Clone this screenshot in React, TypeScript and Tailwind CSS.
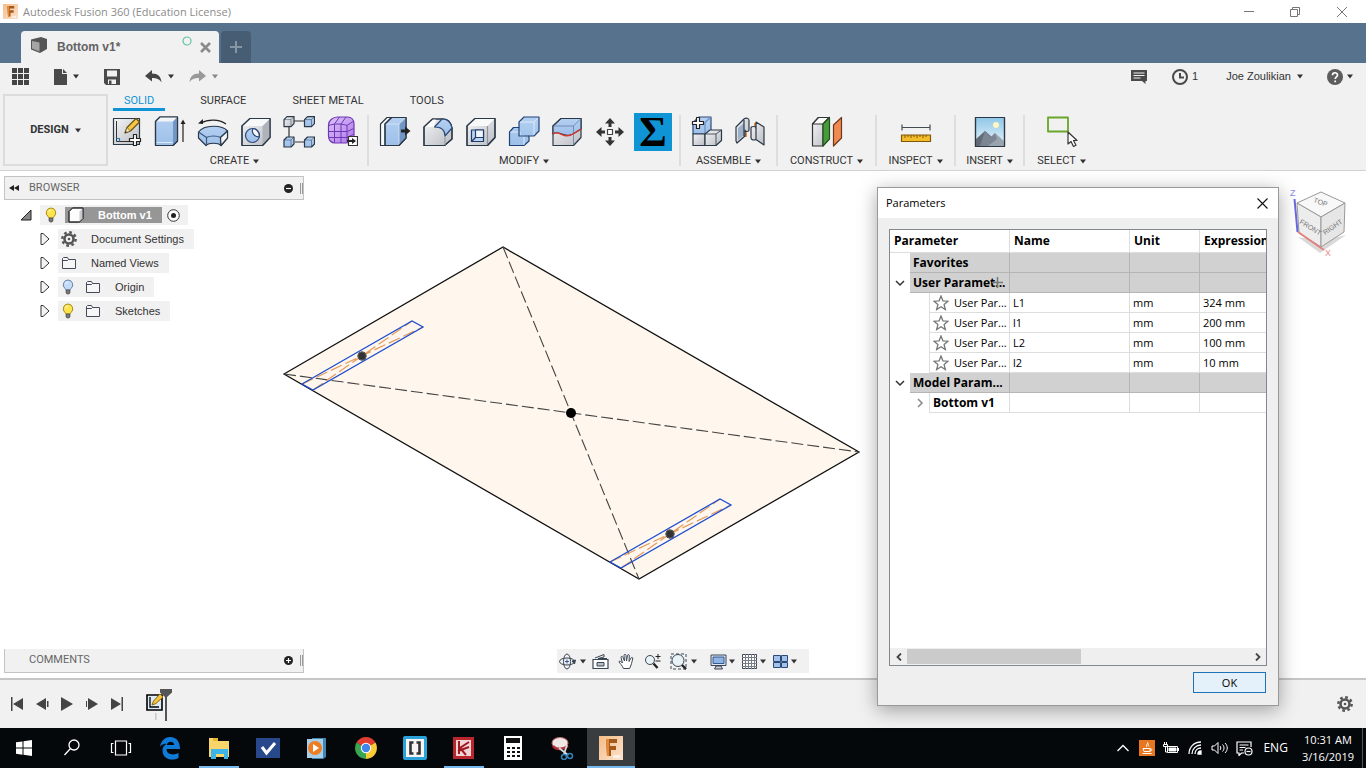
import React, { useState } from "react";

const uiFont = "font-['Liberation_Sans',Arial,sans-serif]";
const capsFont = "font-[Roboto,Arial,sans-serif]";
const winFont = "font-['Open_Sans','Noto_Sans',sans-serif]";

type IconProps = { className?: string };

const Caret: React.FC<IconProps> = ({ className = "text-[#333]" }) => (
  <svg width="6" height="5" viewBox="0 0 6 5" className={className} aria-hidden="true">
    <path d="M0 0.5h6L3 4.5z" fill="currentColor" />
  </svg>
);

const Gradients: React.FC = () => (
  <svg width="0" height="0" className="absolute" aria-hidden="true">
    <defs>
      <linearGradient id="blue" x1="0" y1="0" x2="0" y2="1">
        <stop offset="0" stopColor="#b4d0f2" />
        <stop offset="1" stopColor="#9dbfe8" />
      </linearGradient>
      <linearGradient id="gray" x1="0" y1="0" x2="1" y2="1">
        <stop offset="0" stopColor="#f4f5f7" />
        <stop offset="1" stopColor="#b9bcc2" />
      </linearGradient>
      <linearGradient id="purple" x1="0" y1="0" x2="1" y2="1">
        <stop offset="0" stopColor="#dcc4f8" />
        <stop offset="1" stopColor="#ad76ea" />
      </linearGradient>
      <linearGradient id="sky" x1="0" y1="0" x2="0" y2="1">
        <stop offset="0" stopColor="#8fc6e8" />
        <stop offset="1" stopColor="#eaf6fb" />
      </linearGradient>
      <linearGradient id="fusion" x1="0" y1="0" x2="1" y2="1">
        <stop offset="0" stopColor="#f5bd88" />
        <stop offset="1" stopColor="#fbe3cd" />
      </linearGradient>
    </defs>
  </svg>
);

const ToolSvg: React.FC<{ children: React.ReactNode }> = ({ children }) => (
  <svg
    width="32"
    height="32"
    viewBox="0 0 32 32"
    fill="none"
    stroke="#2b3848"
    strokeWidth="1.2"
    strokeLinejoin="round"
    aria-hidden="true"
  >
    {children}
  </svg>
);

const SketchIcon = () => (
  <ToolSvg>
    <rect x="2.5" y="2.5" width="26" height="26" fill="url(#gray)" />
    <path d="M5.500 5v20.500H26" stroke="#333" strokeWidth="1" />
    <path d="M5.500 22.500h3v3" stroke="#2576b8" />
    <path d="M14 17l2-5.500L25 2.500l3.500 3.500L19.500 15z" fill="#f6c644" stroke="#6d5313" />
    <path d="M14 17l2-5.500 3.500 3.500z" fill="#f7e6c4" stroke="#6d5313" strokeWidth="0.8" />
    <path d="M14 17l.8-2 1.200 1.200z" fill="#222" stroke="none" />
    <path d="M22.500 18.500h3v4h4v3h-4v4h-3v-4h-4v-3h4z" fill="#fff" stroke="#222" />
  </ToolSvg>
);

const ExtrudeIcon = () => (
  <ToolSvg>
    <path d="M1.500 5.500L6 1h17.500v24L19 29.500H1.500z" fill="url(#blue)" />
    <path d="M1.500 5.500L6 1h17.500L19 5.500z" fill="#f2f4f7" stroke="none" />
    <path d="M19 5.500V29.500l4.500-4.500V1z" fill="#7397c4" stroke="none" />
    <path d="M2.500 26.500h16" stroke="#e2edfa" strokeWidth="0.9" />
    <path d="M1.500 5.500L6 1h17.500v24L19 29.500H1.500z" />
    <path d="M29 26V6" stroke="#222" />
    <path d="M26.500 8L29 3.500 31.500 8z" fill="#222" stroke="none" />
  </ToolSvg>
);

const RevolveIcon = () => (
  <ToolSvg>
    <path d="M4 7c7-4 18-4 25 1" stroke="#222" />
    <path d="M1 7.500l5-4.500v5z" fill="#222" stroke="none" />
    <path
      d="M1.500 16C7 8.500 25 8.500 30.500 15v7l-6.500 7.500c-3-3-12-3-15 0L1.500 22z"
      fill="url(#blue)"
    />
    <path d="M1.500 16l8 5.500c3-2 11-2 14 0l7-6.500M9.500 21.500v7.500M23.500 21.500v7.500" stroke="#3d5980" />
    <path d="M23.500 21.500l7-6.500v7l-6.500 7.500z" fill="#f4f5f7" />
  </ToolSvg>
);

const HoleIcon = () => (
  <ToolSvg>
    <path d="M2 10l8-7.500h20v19L22.500 29.500H2z" fill="url(#gray)" />
    <path d="M22.500 10v19.500l7.500-8V2.500z" fill="#aeb2b9" stroke="none" />
    <path d="M2 10l8-7.500h20L22.500 10z" fill="#f7f8f9" stroke="none" />
    <path d="M2 10l8-7.500h20v19L22.500 29.500H2z" />
    <circle cx="12.500" cy="19.500" r="7" fill="url(#blue)" stroke="#2c4a78" />
    <path d="M13 12.500c-2 4 1 8 6 8.500 1-4-2-8-6-8.500z" fill="#f7f8f9" stroke="#2c4a78" />
  </ToolSvg>
);

const MiniCube: React.FC<{ x: number; y: number; fill: string }> = ({ x, y, fill }) => (
  <g>
    <path d={`M${x} ${y + 3}l3-3h7v7l-3 3h-7z`} fill={fill} />
    <path d={`M${x} ${y + 3}h7v7M${x + 7} ${y + 3}l3-3`} strokeWidth="0.5" />
  </g>
);

const PatternIcon = () => (
  <ToolSvg>
    <path d="M11 5h10M6 11v10M12 26h9" stroke="#333" />
    <MiniCube x={1} y={0.6} fill="url(#gray)" />
    <MiniCube x={21.5} y={0.6} fill="url(#blue)" />
    <MiniCube x={1} y={21} fill="url(#blue)" />
    <MiniCube x={21.5} y={21} fill="url(#blue)" />
  </ToolSvg>
);

const FormIcon = () => (
  <ToolSvg>
    <path
      d="M2.500 9c0-4 4-8 9-8h10c4 0 6.500 3 6.500 7v11c0 5-4 8-8 8H9c-4 0-6.500-3-6.500-7z"
      fill="url(#purple)"
      stroke="#6f37b5"
    />
    <path
      d="M3 9.500c4-2 14-2 18 0M2.500 15.500h19M3 21.500h18M8.500 8v18.500M15 8v19M21 9.500v16M21 9.500l6-4M21.500 15.500l6-3M21 21.500l6-3M8.500 8l5-7M15 8l5-7"
      stroke="#6f37b5"
      strokeWidth="1"
    />
    <rect x="22.500" y="20.500" width="9" height="9" fill="#fff" stroke="#333" />
    <path d="M21 25h5" stroke="#222" strokeWidth="2" />
    <path d="M26 22l4 3-4 3z" fill="#222" stroke="none" />
  </ToolSvg>
);

const PressPullIcon = () => (
  <ToolSvg>
    <path d="M1.500 8L8 1.500h4V23l-6 6.500H1.500z" fill="#fafafa" />
    <path d="M6 8l6.500-6.500H27V22l-7 7.500H6z" fill="url(#blue)" />
    <path d="M20 8v21.500L27 22V1.500z" fill="#7397c4" stroke="none" />
    <path d="M6 8h14l7-6.500M20 8v21.500" stroke="#dce9f8" strokeWidth="0.8" />
    <path d="M6 8l6.500-6.500H27V22l-7 7.500H6z" />
    <path d="M22 13.500h4v-3l5.500 4.500-5.500 4.500v-3h-4z" fill="#222" stroke="none" />
  </ToolSvg>
);

const FilletIcon = () => (
  <ToolSvg>
    <path d="M2 11l8.500-8H21c5 0 8 4 9 9v11l-7.500 6.500H2z" fill="url(#gray)" />
    <path d="M2 11l8.500-8H14l-2 8z" fill="#fbfbfc" stroke="none" />
    <path d="M2 11l8.500-8H21c5 0 8 4 9 9v11l-7.500 6.500H2z" />
    <path d="M20 3c6 0 9 4 10 9l-7 8c0-6-3-9-10.500-9z" fill="url(#blue)" stroke="#2c4a78" />
    <path d="M23 20v9" stroke="#9a9ea6" />
  </ToolSvg>
);

const ShellIcon = () => (
  <ToolSvg>
    <path d="M2 10l8-7.500h20v19L22.500 29.500H2z" fill="url(#gray)" />
    <path d="M2 10l8-7.500h20L22.500 10z" fill="#f9f9fa" stroke="none" />
    <path d="M22.500 10v19.500" stroke="#8e939b" />
    <path d="M2 10l8-7.500h20v19L22.500 29.500H2z" />
    <rect x="6.500" y="14" width="12" height="11.500" fill="#bcd4f1" stroke="#1d3c6c" />
    <rect x="10.500" y="14" width="8" height="7.500" fill="#f1f5fa" stroke="#1d3c6c" />
    <path d="M6.500 25.500l4-4" stroke="#1d3c6c" />
  </ToolSvg>
);

const CombineIcon = () => (
  <ToolSvg>
    <path
      d="M1.500 16l4-4.500H11V6l5-5h15v14l-5 5h-5v5l-5 4.500H1.500z"
      fill="url(#blue)"
      stroke="#1f4379"
    />
    <path d="M12 6h14v13M26 6l4-4M2.500 16h9.500v4h4v9" stroke="#e2edfa" strokeWidth="0.9" />
    <path d="M11 11.500V20h10" stroke="#1f4379" />
  </ToolSvg>
);

const SplitIcon = () => (
  <ToolSvg>
    <path d="M2 10l8-7.500h20v19L22.500 29.500H2z" fill="url(#gray)" />
    <path d="M2 18c6-5 10 5 20 0l8-5V2.500H10L2 10z" fill="url(#blue)" />
    <path d="M22.500 10v19M3 10h19.500L29 3.500" stroke="#6d86a8" strokeWidth="0.9" />
    <path d="M2 18c6-5 10 6 20 0l8-5" stroke="#e0342b" strokeWidth="1.400" />
  </ToolSvg>
);

const MoveIcon = () => (
  <ToolSvg>
    <rect x="13.500" y="13.500" width="5" height="5" fill="#fff" stroke="#444" />
    <g fill="#333" stroke="none">
      <path d="M16 2l5 5.500h-3.500V11h-3V7.500H11z" />
      <path d="M16 30l5-5.500h-3.500V21h-3v3.500H11z" />
      <path d="M2 16l5.500-5v3.500H11v3H7.500V21z" />
      <path d="M30 16l-5.500-5v3.500H21v3h3.500V21z" />
    </g>
  </ToolSvg>
);

const SigmaIcon = () => (
  <span className="flex h-[38px] w-[38px] items-center justify-center bg-[#0f94d6] font-['Liberation_Serif',serif] text-[42px] leading-none font-bold text-black">
    Σ
  </span>
);

const ComponentIcon = () => (
  <ToolSvg>
    <path d="M2 18V6.500L8 1h12v16.500L14 18z" fill="url(#blue)" stroke="#2c4a78" />
    <path d="M14 18V6.500L20 1" stroke="#6d8fbd" />
    <path d="M2 18h12v11.500H2z" fill="url(#gray)" />
    <path d="M14 18l5-4h11.500v10.500L25 29.500H14z" fill="url(#gray)" />
    <path d="M14 18h11v11.500M25 18l5.500-4" strokeWidth="0.800" />
    <path d="M5.500 1.500h3v4h4v3h-4v4h-3v-4h-4v-3h4z" fill="#fff" stroke="#222" />
  </ToolSvg>
);

const JointIcon = () => (
  <ToolSvg>
    <path d="M12 12v9M21 7v6" stroke="#ea8b3c" strokeWidth="2" />
    <path d="M2 11l8-8c2-1.500 5-1 5 1.500V14c0 2-4 2-4 0v6l-8 7-1-2z" fill="url(#gray)" />
    <path d="M4 12l6-5v12l-6 5z" fill="#9db0c9" stroke="none" />
    <path d="M10 4v16" />
    <path d="M17 12c0-2 5-2 5 0V6l8 5v18l-8-5.500c-2 1-5 .5-5-1.500z" fill="url(#gray)" />
    <path d="M22 12v11" />
  </ToolSvg>
);

const ConstructIcon = () => (
  <ToolSvg>
    <path d="M1.500 8l6-6.500h10L12 8v22H1.500z" fill="url(#gray)" stroke="#333" />
    <path d="M1.500 8l6-6.500h10.500L12 8z" fill="#fbfbfb" stroke="#333" />
    <path d="M12 8l6.500-6.500V23L12 30z" fill="#479b3b" stroke="#234f1e" />
    <path d="M22.500 9L30.500 1.500V22l-8 8z" fill="#ee8a52" stroke="#703718" />
  </ToolSvg>
);

const InspectIcon = () => (
  <ToolSvg>
    <path d="M2 11.500h28M2 8.500v6M30 8.500v6" stroke="#444b55" />
    <rect x="1.500" y="19" width="29" height="6.500" fill="#f3bd2a" stroke="#80570b" />
    <path d="M5 19v3M8 19v2M11 19v3M14 19v2M17 19v3M20 19v2M23 19v3M26 19v2" stroke="#80570b" strokeWidth="1" />
  </ToolSvg>
);

const InsertIcon = () => (
  <ToolSvg>
    <rect x="1.500" y="1.500" width="29" height="29" fill="url(#sky)" />
    <circle cx="22" cy="9" r="3" fill="#fff6c4" stroke="none" />
    <path d="M2 23l9-8 7 6v9H2z" fill="#626c79" stroke="none" />
    <path d="M9 30l12-13 9 8v5z" fill="#9aa4af" stroke="none" />
    <path d="M11 15l6 6 4-4 2 6-9 7H6z" fill="#7c8692" stroke="none" />
    <rect x="1.500" y="1.500" width="29" height="29" />
  </ToolSvg>
);

const SelectIcon = () => (
  <ToolSvg>
    <rect x="2" y="1.500" width="20" height="14" stroke="#69a52b" strokeWidth="1.800" />
    <path d="M22 16v12l3-2.500 2.500 5 2.500-1.200-2.500-4.800h3.500z" fill="#fff" stroke="#333" />
  </ToolSvg>
);

const GearIcon: React.FC<IconProps> = ({ className = "text-[#555]" }) => (
  <svg width="16" height="16" viewBox="0 0 16 16" fill="none" className={className} stroke="currentColor" aria-hidden="true">
    <circle cx="8" cy="8" r="6.700" strokeWidth="2.400" strokeDasharray="2.700 2.560" />
    <circle cx="8" cy="8" r="4.500" strokeWidth="2.600" />
    <circle cx="8" cy="8" r="1.300" fill="currentColor" stroke="none" />
  </svg>
);

const Bulb: React.FC<{ on?: boolean }> = ({ on }) => (
  <svg width="12" height="16" viewBox="0 0 12 16" aria-hidden="true">
    <path
      d="M6 1a4.800 4.800 0 0 1 3 8.500c-.6.600-.8 1-.8 1.500H3.800c0-.5-.2-.9-.8-1.500A4.800 4.800 0 0 1 6 1z"
      fill={on ? "#fbe44c" : "#c4dbf7"}
      stroke={on ? "#a98b1c" : "#6684ac"}
    />
    <path d="M4 11h4v3l-1 1H5l-1-1z" fill="#777" stroke="#444" strokeWidth="0.6" />
    <path d="M4 5c0-1 .8-2 2-2" stroke="#fff" fill="none" />
  </svg>
);

const FolderIcon = () => (
  <svg width="16" height="14" viewBox="0 0 16 14" fill="#f6f6f8" stroke="#444b57" aria-hidden="true">
    <path d="M1.500 12.500v-10l1-1h4l1 2h7v9z" />
    <path d="M1.500 4.500h5l1-1" fill="none" />
  </svg>
);

const BodyIcon = () => (
  <svg width="16" height="16" viewBox="0 0 16 16" stroke="#333" strokeLinejoin="round" aria-hidden="true">
    <path d="M1 4.500L4.500 1H15v10.500L11.500 15H1z" fill="#fdfdfd" />
    <path d="M11.500 4.500V15l3.500-3.500V1z" fill="#c9cbd0" stroke="none" />
    <path d="M1 4.500L4.500 1H15v10.500L11.500 15H1z" fill="none" />
  </svg>
);

const FusionLogo: React.FC<{ size: number }> = ({ size }) => (
  <svg width={size} height={size} viewBox="0 0 24 24" aria-hidden="true">
    <rect width="24" height="24" fill="url(#fusion)" />
    <path d="M7 3h11v4h-7v3h6v4h-5v6H8z" fill="#a3591c" />
    <path d="M7 3h3v17H8z" fill="#e58a39" />
    <path d="M14 19h7v3h-7z" fill="#fff" opacity="0.6" />
  </svg>
);

const TitleBar: React.FC = () => (
  <header className={`flex h-[23px] items-center bg-white ${winFont}`}>
    <div className="ml-[3px] flex items-center gap-[5px]">
      <FusionLogo size={15} />
      <h1 className="text-[11px] leading-4 text-[#8b8b8b]">Autodesk Fusion 360 (Education License)</h1>
    </div>
    <div className="ml-auto flex items-center text-[#777]">
      <button aria-label="Minimize" className="flex h-[22px] w-[46px] items-center justify-center">
        <svg width="10" height="10" viewBox="0 0 10 10" stroke="currentColor">
          <path d="M0 4.500h10" />
        </svg>
      </button>
      <button aria-label="Restore" className="flex h-[22px] w-[46px] items-center justify-center">
        <svg width="10" height="10" viewBox="0 0 10 10" fill="none" stroke="currentColor">
          <path d="M0.500 2.500h7v7h-7zM2.500 2.500v-2h7v7h-2" />
        </svg>
      </button>
      <button aria-label="Close" className="flex h-[22px] w-12 items-center justify-center">
        <svg width="10" height="10" viewBox="0 0 10 10" stroke="currentColor">
          <path d="M0 0l10 10M10 0L0 10" />
        </svg>
      </button>
    </div>
  </header>
);

const DocumentTabs: React.FC = () => (
  <div className={`flex h-10 items-end gap-0.5 bg-[#56728c] pl-[21px] ${uiFont}`}>
    <div className="flex h-8 w-[198px] items-center rounded-t bg-[#f1f1f1] pr-2 pl-2.5">
      <svg width="16" height="16" viewBox="0 0 16 16" className="mb-1" aria-hidden="true">
        <path d="M0 2.500L10 0l6 2v10l-7 4-9-3.500z" fill="#555" />
        <path d="M1 4l7.500 1.500v9L1 11.500z" fill="#a5a5a5" />
      </svg>
      <span className="ml-2.5 text-xs font-bold text-[#636363]">Bottom v1*</span>
      <svg width="10" height="10" viewBox="0 0 10 10" className="mb-3 ml-auto" aria-hidden="true">
        <circle cx="5" cy="5" r="4" fill="none" stroke="#5fc3a5" strokeWidth="1.200" />
      </svg>
      <button aria-label="Close tab" className="ml-2">
        <svg width="11" height="11" viewBox="0 0 11 11" stroke="#8a8a8a" strokeWidth="2.600">
          <path d="M1 1l9 9M10 1l-9 9" />
        </svg>
      </button>
    </div>
    <button aria-label="New tab" className="flex h-8 w-[30px] items-center justify-center rounded-t bg-[#475d74]">
      <svg width="12" height="12" viewBox="0 0 12 12" stroke="#8796a5" strokeWidth="2">
        <path d="M6 0v12M0 6h12" />
      </svg>
    </button>
  </div>
);

const QuickAccess: React.FC = () => (
  <div className={`flex h-[27px] items-center pr-[13px] pl-3 text-[11px] text-[#333] ${uiFont}`}>
    <button aria-label="Data panel">
      <svg width="17" height="17" viewBox="0 0 17 17" fill="#444">
        <path d="M0 0h5v5H0zM6 0h5v5H6zM12 0h5v5h-5zM0 6h5v5H0zM6 6h5v5H6zM12 6h5v5h-5zM0 12h5v5H0zM6 12h5v5H6zM12 12h5v5h-5z" />
      </svg>
    </button>
    <button aria-label="File" className="ml-[25px] flex items-center gap-1.5">
      <svg width="13" height="16" viewBox="0 0 13 16" fill="#4a4a4a">
        <path d="M0 0h8v5h5v11H0z" />
        <path d="M9 0l4 4H9z" />
      </svg>
      <Caret />
    </button>
    <button aria-label="Save" className="ml-[25px]">
      <svg width="16" height="16" viewBox="0 0 16 16">
        <path d="M0 0h16v16H2l-2-2z" fill="#4a4a4a" />
        <path d="M3 1.500h10v6H3zM4 10.500h8V15H4z" fill="#f1f1f1" />
        <path d="M5 11.500h2.500V15H5z" fill="#4a4a4a" />
      </svg>
    </button>
    <button aria-label="Undo" className="ml-[25px] flex items-center gap-1.5">
      <svg width="17" height="13" viewBox="0 0 17 13" fill="#444">
        <path d="M7 0v3.500c6 0 9 3 9.500 9-2-3.500-5-4.500-9.500-4.500v3.500L0 6z" />
      </svg>
      <Caret />
    </button>
    <button aria-label="Redo" className="ml-[15px] flex items-center gap-1.5">
      <svg width="17" height="13" viewBox="0 0 17 13" fill="#999">
        <path d="M10 0v3.500C4 3.500 1 6.500.5 12.500c2-3.500 5-4.500 9.500-4.500v3.500L17 6z" />
      </svg>
      <Caret className="text-[#888]" />
    </button>

    <button aria-label="Comments" className="ml-auto">
      <svg width="16" height="14" viewBox="0 0 16 14">
        <path d="M0 0h16v11h-1.500v3L11 11H0z" fill="#4a4a4a" />
        <path d="M2.500 3h11M2.500 5.500h11M2.500 8h7" stroke="#f1f1f1" />
      </svg>
    </button>
    <button aria-label="Job status" className="ml-[25px] flex items-center gap-1">
      <svg width="16" height="16" viewBox="0 0 16 16" fill="none" stroke="#4a4a4a" strokeWidth="2">
        <circle cx="8" cy="8" r="7" />
        <path d="M8 4v4.500h4" />
      </svg>
      1
    </button>
    <button className="ml-7 flex items-center gap-1.5">
      Joe Zoulikian
      <Caret />
    </button>
    <button aria-label="Help" className="ml-6 flex items-center gap-1">
      <svg width="16" height="16" viewBox="0 0 16 16">
        <circle cx="8" cy="8" r="8" fill="#5d5d5d" />
        <path d="M5.500 6.200C5.500 3 10.500 3 10.500 6c0 1.800-2.300 1.800-2.300 4M8.200 11.500v1.800" stroke="#fff" strokeWidth="1.700" fill="none" />
      </svg>
      <Caret />
    </button>
  </div>
);

const ribbonTabs = ["SOLID", "SURFACE", "SHEET METAL", "TOOLS"];

const ribbonGroups = [
  {
    label: "CREATE",
    width: "w-[259px] pr-1.5",
    tools: [
      { name: "Create sketch", Icon: SketchIcon },
      { name: "Extrude", Icon: ExtrudeIcon },
      { name: "Revolve", Icon: RevolveIcon },
      { name: "Hole", Icon: HoleIcon },
      { name: "Pattern", Icon: PatternIcon },
      { name: "Create form", Icon: FormIcon },
    ],
  },
  {
    label: "MODIFY",
    width: "w-[310px]",
    tools: [
      { name: "Press pull", Icon: PressPullIcon },
      { name: "Fillet", Icon: FilletIcon },
      { name: "Shell", Icon: ShellIcon },
      { name: "Combine", Icon: CombineIcon },
      { name: "Split body", Icon: SplitIcon },
      { name: "Move", Icon: MoveIcon },
      { name: "Change parameters", Icon: SigmaIcon },
    ],
  },
  {
    label: "ASSEMBLE",
    width: "w-[95px]",
    tools: [
      { name: "New component", Icon: ComponentIcon },
      { name: "Joint", Icon: JointIcon },
    ],
  },
  { label: "CONSTRUCT", width: "w-[97px]", tools: [{ name: "Offset plane", Icon: ConstructIcon }] },
  { label: "INSPECT", width: "w-[77px]", tools: [{ name: "Measure", Icon: InspectIcon }] },
  { label: "INSERT", width: "w-[67px]", tools: [{ name: "Decal", Icon: InsertIcon }] },
  { label: "SELECT", width: "w-[73px]", tools: [{ name: "Window select", Icon: SelectIcon }] },
];

const Ribbon: React.FC = () => {
  const [activeTab, setActiveTab] = useState("SOLID");

  return (
    <div className={`flex h-[81px] border-b border-[#d2d2d2] pl-[3px] text-[11px] text-[#333] ${capsFont}`}>
      <button className="mt-1 flex h-[72px] w-[105px] items-center justify-center gap-1.5 border-2 border-[#dcdcdc] font-bold">
        DESIGN
        <Caret />
      </button>
      <div>
        <div className="ml-[5px] flex h-[21px] gap-6">
          {ribbonTabs.map((tab) => (
            <button
              key={tab}
              onClick={() => setActiveTab(tab)}
              className={
                tab === activeTab
                  ? "border-b-[3px] border-[#0f94d6] px-[11px] pt-[3px] text-[#0f94d6]"
                  : "border-b-[3px] border-transparent px-[11px] pt-[3px]"
              }
            >
              {tab}
            </button>
          ))}
        </div>
        <div className="flex pt-0.5">
          {ribbonGroups.map((group, i) => (
            <React.Fragment key={group.label}>
              {i > 0 && <div className="mt-0.5 mb-1 w-0.5 bg-[#dedede]" />}
              <div className={`flex flex-col items-center ${group.width}`}>
                <div className="flex h-[38px] gap-[5px]">
                  {group.tools.map(({ name, Icon }) => (
                    <button key={name} aria-label={name} className="flex w-[38px] items-center justify-center">
                      <Icon />
                    </button>
                  ))}
                </div>
                <button className="flex h-[19px] items-center gap-1 pt-0.5">
                  {group.label}
                  <Caret />
                </button>
              </div>
            </React.Fragment>
          ))}
        </div>
      </div>
    </div>
  );
};

const SketchDrawing: React.FC = () => (
  <svg width="1366" height="507" viewBox="0 171 1366 507" fill="none" className="absolute top-0 left-0" aria-hidden="true">
    <path d="M284 374L503 247 859 452 639 579z" fill="#fff7ed" stroke="#111" strokeWidth="1.300" />
    <path d="M284 374L859 452M503 247L639 579" stroke="#444" strokeWidth="1.100" strokeDasharray="12 4" />
    <circle cx="571" cy="413" r="5" fill="#000" />
    {[
      [0, 0],
      [308, 178],
    ].map(([dx, dy]) => (
      <g key={dx} transform={`translate(${dx} ${dy})`}>
        <path d="M302 384L423 327M313 390L412 321" stroke="#e39a5b" strokeWidth="1.200" strokeDasharray="12 4" />
        <path d="M302 384L412 321 423 327 313 390z" stroke="#1e4fd0" strokeWidth="1.300" />
        <circle cx="362" cy="356" r="4.500" fill="#333" />
        <circle cx="362" cy="356" r="4" stroke="#555" />
      </g>
    ))}
  </svg>
);

const PanelHeader: React.FC<{ title: string; open?: boolean }> = ({ title, open }) => (
  <div
    className={`flex h-6 items-center border-x border-b border-[#c3c3c3] bg-[#f1f1f1] text-[11px] text-[#666] ${capsFont} ${open ? "border-t" : ""}`}
  >
    <span className="ml-1 w-5">
      {open && (
        <svg width="10" height="6" viewBox="0 0 10 6" fill="#222" aria-hidden="true">
          <path d="M5 0v6L0 3zM10 0v6L5 3z" />
        </svg>
      )}
    </span>
    <h2>{title}</h2>
    <button aria-label={open ? "Collapse" : "Expand"} className="ml-auto">
      <svg width="9" height="9" viewBox="0 0 9 9">
        <circle cx="4.500" cy="4.500" r="4.500" fill="#222" />
        <path d={open ? "M2 4.500h5" : "M2 4.500h5M4.500 2v5"} stroke="#fff" strokeWidth="1.200" />
      </svg>
    </button>
    <span className="ml-[7px] h-[11px] w-[3px] border-x border-[#999]" />
  </div>
);

const ExpandArrow = () => (
  <button aria-label="Expand" className="w-[18px]">
    <svg width="10" height="14" viewBox="0 0 10 14" fill="#f4f4f4" stroke="#333" strokeLinejoin="round">
      <path d="M1 1.500h2L9 7 3 12.500H1z" />
    </svg>
  </button>
);

const browserRows = [
  { label: "Document Settings", bulb: null, folder: false },
  { label: "Named Views", bulb: null, folder: true },
  { label: "Origin", bulb: "off", folder: true },
  { label: "Sketches", bulb: "on", folder: true },
];

const Browser: React.FC = () => (
  <section className={`w-[300px] text-[11px] text-[#333] ${uiFont}`}>
    <PanelHeader title="BROWSER" open />
    <ul className="mt-[5px] space-y-1">
      <li className="flex h-5 items-center pl-4">
        <svg width="20" height="12" viewBox="0 0 20 12" aria-hidden="true">
          <path d="M11 1v10H1z" fill="#888" stroke="#222" />
        </svg>
        <div className="flex h-5 items-center bg-[#f1f1f1] pr-2 pl-[5px]">
          <Bulb on />
          <div className="ml-2 flex h-4 w-[97px] items-center bg-[#969696] pl-[3px] font-bold text-white">
            <BodyIcon />
            <span className="ml-3.5">Bottom v1</span>
          </div>
          <label className="ml-[5px] flex">
            <input type="radio" defaultChecked className="peer sr-only" aria-label="Activate component" />
            <svg width="13" height="13" viewBox="0 0 13 13" className="block">
              <circle cx="6.500" cy="6.500" r="5.800" fill="#fff" stroke="#333" />
              <circle cx="6.500" cy="6.500" r="2.500" fill="#222" />
            </svg>
          </label>
        </div>
      </li>
      {browserRows.map((row) => (
        <li key={row.label} className="flex h-5 items-center pl-9">
          <ExpandArrow />
          <div className="flex h-5 items-center bg-[#f1f1f1] pr-2.5 pl-[3px]">
            {row.bulb && (
              <span className="mr-[11px] ml-px">
                <Bulb on={row.bulb === "on"} />
              </span>
            )}
            {row.folder ? <FolderIcon /> : <GearIcon />}
            <span className="ml-3.5">{row.label}</span>
          </div>
        </li>
      ))}
    </ul>
  </section>
);

const ViewCube: React.FC = () => (
  <svg width="60" height="76" viewBox="1288 184 60 76" className={uiFont} aria-hidden="true">
    <path d="M1298 236l22 16 26-18-26 6z" fill="#d9d9d9" />
    <path d="M1321 191l24 11-24 14-24-14z" fill="#f8f8f8" stroke="#999" />
    <path d="M1297 202l24 14v30l-22-14z" fill="#ededed" stroke="#999" />
    <path d="M1345 202l-24 14v30l23-15z" fill="#e6e6e6" stroke="#999" />
    <path d="M1294.500 198l3 33" stroke="#6a68e0" strokeWidth="2" />
    <path d="M1298 231l26 18" stroke="#e58080" strokeWidth="2" />
    <text x="1290" y="195" fontSize="9" fill="#8a88ea">Z</text>
    <text x="1325" y="255" fontSize="9" fill="#ee8a8a">X</text>
    <text x="1313" y="201" fontSize="7" fill="#777" transform="rotate(20 1313 201)">TOP</text>
    <text x="1299" y="222" fontSize="7" fill="#777" transform="rotate(32 1299 222)">FRONT</text>
    <text x="1325" y="234" fontSize="7" fill="#777" transform="rotate(-34 1325 234)">RIGHT</text>
  </svg>
);

const NavSvg: React.FC<{ children: React.ReactNode }> = ({ children }) => (
  <svg width="17" height="17" viewBox="0 0 17 17" fill="none" stroke="#3b4654" aria-hidden="true">
    {children}
  </svg>
);

const NavBar: React.FC = () => (
  <div className="flex h-6 w-[252px] items-center bg-[#f1f1f1] pl-0.5">
    <button aria-label="Orbit" className="flex items-center gap-1">
      <NavSvg>
        <ellipse cx="8" cy="8.500" rx="7.500" ry="3.500" />
        <ellipse cx="8" cy="8.500" rx="3.500" ry="7.500" />
        <path d="M8 6.500v4M6 8.500h4" stroke="#2c5fa0" />
        <path d="M13 8l3.500-1-1 4z" fill="#3b4654" />
      </NavSvg>
      <Caret />
    </button>
    <button aria-label="Look at" className="ml-1.5">
      <NavSvg>
        <path d="M1 6.500h15v9H1z" fill="#fff" strokeWidth="1.200" />
        <path d="M5 9.500h7v3.500H5z" fill="#b9bec8" />
        <path d="M3 5l9-3.500V4L6 5.500h9" />
      </NavSvg>
    </button>
    <button aria-label="Pan" className="ml-[9px]">
      <NavSvg>
        <path
          d="M5.500 15.500C4 12 2 10.500 1 9c0-1.500 1.800-1 3.500 1L3 4.500C3 3 4.500 3 5 4.500L6.500 8 6 2.500C6 1 8 1 8 2.500L8.500 8 9.500 2.500c.3-1.300 2-1 1.800.5L11 8.500 13 5c.8-1.200 2.200-.5 1.700 1-.9 3-1.200 6-3.200 9.500z"
          fill="#fff"
        />
      </NavSvg>
    </button>
    <button aria-label="Zoom" className="ml-[9px]">
      <NavSvg>
        <circle cx="6" cy="7" r="4.500" fill="#e7f3f6" />
        <path d="M9.500 10.500l4 4.500" stroke="#222" strokeWidth="2.400" />
        <path d="M14 1v5M11.500 3.500h5M11.500 8h5" stroke="#222" />
      </NavSvg>
    </button>
    <button aria-label="Fit" className="ml-[9px] flex items-center gap-1">
      <NavSvg>
        <path d="M1 1h15v15H1z" strokeDasharray="3 2" />
        <circle cx="8" cy="7.500" r="6" fill="#e7f3f6" />
        <path d="M12 12l4 4" stroke="#222" strokeWidth="2.400" />
      </NavSvg>
      <Caret />
    </button>
    <button aria-label="Display settings" className="ml-[13px] flex items-center gap-0.5">
      <NavSvg>
        <path d="M1 2h15v10.500H1z" fill="#dfe7f2" />
        <path d="M3 4h11v6.500H3z" fill="#8fb4e3" stroke="#345a92" />
        <path d="M6 13h5l1.500 3h-8z" fill="#ccc" />
      </NavSvg>
      <Caret />
    </button>
    <button aria-label="Grid and snaps" className="ml-1.5 flex items-center gap-0.5">
      <NavSvg>
        <path d="M1.500 1.500h14v14h-14z" fill="#fff" />
        <path d="M4.500 1v15M7.500 1v15M10.500 1v15M13.500 1v15M1 4.500h15M1 7.500h15M1 10.500h15M1 13.500h15" stroke="#777d86" />
      </NavSvg>
      <Caret />
    </button>
    <button aria-label="Viewports" className="ml-1.5 flex items-center gap-0.5">
      <NavSvg>
        <path d="M1.500 2.500h7v6h-7zM9.500 2.500h6v6h-6zM1.500 9.500h7v5h-7zM9.500 9.500h6v5h-6z" fill="#a2c2ec" stroke="#2c4a78" />
      </NavSvg>
      <Caret />
    </button>
  </div>
);

const userParameters = [
  { name: "L1", unit: "mm", expression: "324 mm" },
  { name: "l1", unit: "mm", expression: "200 mm" },
  { name: "L2", unit: "mm", expression: "100 mm" },
  { name: "l2", unit: "mm", expression: "10 mm" },
];

const Chevron: React.FC<{ open?: boolean; label: string }> = ({ open, label }) => (
  <button aria-label={label} className="flex h-4 w-5 items-center justify-center">
    <svg width="10" height="10" viewBox="0 0 10 10" fill="none" stroke={open ? "#333" : "#888"} strokeWidth="1.500">
      <path d={open ? "M1 3l4 4 4-4" : "M3 1l4 4-4 4"} />
    </svg>
  </button>
);

const Star: React.FC<{ label: string }> = ({ label }) => (
  <button aria-label={label} className="shrink-0">
    <svg width="16" height="16" viewBox="0 0 16 16" fill="none" stroke="#777" strokeWidth="1.300">
      <path d="M8 1l1.900 4.800 5.100.4-3.900 3.300 1.200 5L8 11.800l-4.300 2.700 1.200-5L1 6.200l5.100-.4z" />
    </svg>
  </button>
);

const GroupRow: React.FC<{ title: string; chevron?: boolean; add?: boolean }> = ({ title, chevron, add }) => (
  <tr className="h-5 font-bold">
    <td>{chevron && <Chevron open label={`Collapse ${title}`} />}</td>
    <td colSpan={2} className="border-r border-b border-[#b5b5b5] bg-[#d1d1d1] pl-[3px]">
      <div className="flex items-center">
        <span>{title}</span>
        {add && (
          <button aria-label="Add user parameter" className="-ml-3.5">
            <svg width="11" height="11" viewBox="0 0 11 11" stroke="#777" strokeWidth="1.500">
              <path d="M5.500 0v11M0 5.500h11" />
            </svg>
          </button>
        )}
      </div>
    </td>
    <td className="border-r border-b border-[#b5b5b5] bg-[#d1d1d1]" />
    <td className="border-r border-b border-[#b5b5b5] bg-[#d1d1d1]" />
    <td className="border-b border-[#b5b5b5] bg-[#d1d1d1]" />
  </tr>
);

const ParametersDialog: React.FC = () => (
  <div
    role="dialog"
    aria-label="Parameters"
    className={`absolute top-4 right-[87px] z-10 flex h-[519px] w-[402px] flex-col border border-[#999] bg-[#efefef] text-xs text-black shadow-[0_4px_18px_rgba(0,0,0,0.35)] ${winFont}`}
  >
    <div className="flex h-[30px] items-center bg-white pr-2.5 pl-2">
      <h2 className="text-[11px]">Parameters</h2>
      <button aria-label="Close dialog" className="ml-auto">
        <svg width="11" height="11" viewBox="0 0 11 11" stroke="#111" strokeWidth="1.100">
          <path d="M.5.500l10 10M10.500.500l-10 10" />
        </svg>
      </button>
    </div>

    <div className="mx-[11px] mt-[11px] flex h-[437px] flex-col border border-[#828790] bg-white">
      <div className="flex-1 overflow-hidden">
        <table className="w-[430px] table-fixed border-separate border-spacing-0 text-left leading-4">
          <colgroup>
            <col className="w-5" />
            <col className="w-5" />
            <col className="w-20" />
            <col className="w-[120px]" />
            <col className="w-[70px]" />
            <col className="w-[120px]" />
          </colgroup>
          <thead>
            <tr className="h-[23px]">
              <th colSpan={3} className="border-r border-b border-[#ddd] pl-1">Parameter</th>
              <th className="border-r border-b border-[#ddd] pl-1">Name</th>
              <th className="border-r border-b border-[#ddd] pl-1">Unit</th>
              <th className="border-b border-[#ddd] pl-1">Expression</th>
            </tr>
          </thead>
          <tbody>
            <GroupRow title="Favorites" />
            <GroupRow title="User Paramet..." chevron add />
            {userParameters.map((param) => (
              <tr key={param.name} className="h-5 text-[11px]">
                <td />
                <td className="border-r border-[#ddd]" />
                <td className="border-r border-b border-[#ddd]">
                  <div className="flex items-center gap-[5px] pl-[3px] whitespace-nowrap">
                    <Star label={`Favorite ${param.name}`} />
                    User Par...
                  </div>
                </td>
                <td className="border-r border-b border-[#ddd] pl-[3px]">{param.name}</td>
                <td className="border-r border-b border-[#ddd] pl-[3px]">{param.unit}</td>
                <td className="border-b border-[#ddd] pl-[3px]">{param.expression}</td>
              </tr>
            ))}
            <GroupRow title="Model Param..." chevron />
            <tr className="h-5">
              <td />
              <td className="border-r border-[#ddd]">
                <Chevron label="Expand Bottom v1" />
              </td>
              <td className="border-r border-b border-[#ddd] pl-[3px] font-bold">Bottom v1</td>
              <td className="border-r border-b border-[#ddd]" />
              <td className="border-r border-b border-[#ddd]" />
              <td className="border-b border-[#ddd]" />
            </tr>
          </tbody>
        </table>
      </div>
      <div className="flex h-[17px] items-center bg-[#efefef]">
        <button aria-label="Scroll left" className="flex w-[17px] justify-center">
          <svg width="6" height="8" viewBox="0 0 6 8" fill="none" stroke="#444" strokeWidth="1.800">
            <path d="M5 .5L1.500 4 5 7.500" />
          </svg>
        </button>
        <div className="h-[15px] flex-1">
          <div className="h-full w-[174px] bg-[#cbcbcb]" />
        </div>
        <button aria-label="Scroll right" className="flex w-[17px] justify-center">
          <svg width="6" height="8" viewBox="0 0 6 8" fill="none" stroke="#444" strokeWidth="1.800">
            <path d="M1 .5L4.500 4 1 7.500" />
          </svg>
        </button>
      </div>
    </div>

    <button className="mt-[6px] mr-3 ml-auto h-[21px] w-[73px] border border-[#1d72b8] bg-[#e4f0fa] text-[11px] leading-4">
      OK
    </button>
  </div>
);

const Timeline: React.FC = () => (
  <div className="flex h-[50px] items-center border-t-2 border-[#c6c6c6] bg-[#f1f1f1] pr-[13px] pl-[11px]">
    <div className="flex items-center gap-[11px] text-[#444]">
      {[
        { name: "Go to start", d: "M0 0h1.500v14H0zM12 1v12L2 7z" },
        { name: "Step back", d: "M10 1v12L0 7zM11 4h1.500v6H11z" },
        { name: "Play", d: "M0 0v14l12-7z" },
        { name: "Step forward", d: "M2 1v12l10-6zM-.5 4H1v6H-.5z" },
        { name: "Go to end", d: "M0 1v12l10-6zM10.500 0H12v14h-1.500z" },
      ].map((control) => (
        <button key={control.name} aria-label={control.name}>
          <svg width="14" height="14" viewBox="0 0 14 14" fill="currentColor">
            <path d={control.d} />
          </svg>
        </button>
      ))}
    </div>
    <button aria-label="Sketch feature" className="ml-[21px]">
      <svg width="28" height="34" viewBox="0 0 28 34">
        <path d="M1 8h15v15H1z" fill="#dcebf8" stroke="#000" strokeWidth="1.600" />
        <path d="M4 10v10h9" fill="none" stroke="#000" strokeWidth="1.300" />
        <path d="M6 18l1.500-4L14 7l3 3-7 6.500z" fill="#f5c43c" stroke="#8a6410" />
        <path d="M9 26h1.500v7H9z" fill="#c8c8c8" />
        <path d="M14 2h12v3.500L21 10v24h-2V10l-5-4.500z" fill="#555" />
      </svg>
    </button>
    <button aria-label="Timeline settings" className="ml-auto">
      <GearIcon />
    </button>
  </div>
);

const taskbarApps = [
  {
    name: "Search",
    icon: (
      <g fill="none" stroke="#fff" strokeWidth="1.300">
        <circle cx="14" cy="9" r="5" />
        <path d="M10.500 12.500L4.500 19" />
      </g>
    ),
  },
  {
    name: "Task View",
    icon: (
      <g fill="none" stroke="#fff" strokeWidth="1.200">
        <path d="M6.500 5h11v14h-11zM4.500 7.500h-2v9h2M19.500 7.500h2v9h-2" />
      </g>
    ),
  },
  {
    name: "Edge",
    icon: (
      <path
        d="M2 11C3 4 8 1 12 1c7 0 10 5 10 12H8.500c0 6 8 6.500 12 4v5c-7 3.500-16 1-16-7.500C4.500 11 7 8.500 9.500 7.500 5.500 7.500 3 9 2 11zm6.800-2h7.400c0-4.500-7-4.500-7.400 0z"
        fill="#0f7bd8"
      />
    ),
  },
  {
    name: "File Explorer",
    running: true,
    icon: (
      <>
        <path d="M2 2h8l1 3h11v16H2z" fill="#f8d56b" />
        <path d="M6 2h5v3H6z" fill="#eab530" />
        <path d="M4 13h17v10h-4v-5H9v5H4z" fill="#3eb5e8" />
      </>
    ),
  },
  {
    name: "Checkmark",
    icon: (
      <>
        <rect x="0" y="2" width="24" height="20" fill="#27498c" />
        <path d="M6 11l4.500 6L19 7" fill="none" stroke="#fff" strokeWidth="3" />
      </>
    ),
  },
  {
    name: "Media Player",
    icon: (
      <>
        <path d="M7 2h14v19l-3 2H7z" fill="#4286b6" />
        <rect x="2" y="3" width="16" height="19" fill="#a9cfe8" />
        <circle cx="10" cy="12" r="7" fill="#ee7d22" />
        <path d="M8 8l6 4-6 4z" fill="#fff" />
      </>
    ),
  },
  {
    name: "Chrome",
    icon: (
      <>
        <path d="M12 12L2.500 6.500a11 11 0 0 1 19 0z" fill="#e13d31" />
        <path d="M12 12l9.500-5.500A11 11 0 0 1 12 23z" fill="#fccc35" />
        <path d="M12 12v11A11 11 0 0 1 2.500 6.500z" fill="#38a551" />
        <circle cx="12" cy="12" r="5.200" fill="#fff" />
        <circle cx="12" cy="12" r="4.200" fill="#4184ec" />
      </>
    ),
  },
  {
    name: "Brackets",
    icon: (
      <>
        <rect width="24" height="24" rx="2" fill="#2ba3d9" />
        <rect x="3" y="3" width="18" height="18" fill="#f5f5f5" />
        <path d="M10.500 6.500h-3v11h3M13.500 6.500h3v11h-3" fill="none" stroke="#333" strokeWidth="2.600" />
      </>
    ),
  },
  {
    name: "Drawing tool",
    running: true,
    icon: (
      <>
        <rect x="1" y="1" width="21" height="22" fill="#b9262e" />
        <rect x="4" y="4" width="15" height="16" fill="#f2d5d6" />
        <path d="M7 5v13M17 6L8 12l6 7M6 15l11-4" fill="none" stroke="#a01822" strokeWidth="2" />
      </>
    ),
  },
  {
    name: "Calculator",
    icon: (
      <>
        <rect x="3" y="0" width="18" height="24" fill="#fff" />
        <path d="M5 2h14v5H5zM6 11h3v2H6zM11 11h3v2h-3zM16 11h3v2h-3zM6 15h3v2H6zM11 15h3v2h-3zM16 15h3v2h-3zM6 19h3v2H6zM11 19h3v2h-3zM16 19h3v2h-3z" fill="#111" />
      </>
    ),
  },
  {
    name: "Snipping Tool",
    icon: (
      <>
        <ellipse cx="10" cy="7" rx="8" ry="5.500" fill="#efe6e6" stroke="#c5666a" />
        <path d="M3 10c3 4 10 4 15 0" stroke="#b32d35" strokeWidth="2.500" fill="none" />
        <path d="M9 12l9 7M17 9l-3 9" stroke="#d5d9de" strokeWidth="1.800" />
        <circle cx="20" cy="20" r="2.500" fill="none" stroke="#3481b7" strokeWidth="1.500" />
        <circle cx="14" cy="21" r="2.500" fill="none" stroke="#3481b7" strokeWidth="1.500" />
      </>
    ),
  },
];

const Taskbar: React.FC = () => (
  <footer className={`flex h-10 items-stretch gap-px bg-[#05080a] text-xs text-white ${winFont}`}>
    <button aria-label="Start" className="flex w-[47px] items-center justify-center">
      <svg width="16" height="16" viewBox="0 0 16 16" fill="#fff">
        <path d="M0 2.300L6.500 1.400v6.200H0zM7.500 1.200L16 0v7.600H7.500zM0 8.500h6.500v6.200L0 13.800zM7.500 8.500H16V16l-8.500-1.200z" />
      </svg>
    </button>
    {taskbarApps.map((app) => (
      <button key={app.name} aria-label={app.name} className="flex w-12 flex-col items-center justify-end">
        <svg width="24" height="24" viewBox="0 0 24 24" className="mb-1.5">
          {app.icon}
        </svg>
        <span className={app.running ? "h-0.5 w-10 bg-[#76b9ed]" : "h-0.5"} />
      </button>
    ))}
    <button aria-label="Fusion 360" className="flex w-12 flex-col items-center justify-end bg-[#3a3d3f]">
      <span className="mb-1.5">
        <FusionLogo size={24} />
      </span>
      <span className="h-0.5 w-full bg-[#76b9ed]" />
    </button>

    <div className="ml-auto flex items-center gap-2">
      <svg width="12" height="8" viewBox="0 0 12 8" fill="none" stroke="#fff" strokeWidth="1.300" aria-hidden="true">
        <path d="M.5 7L6 1.500 11.500 7" />
      </svg>
      <svg width="16" height="16" viewBox="0 0 16 16" fill="none" stroke="#fff" className="ml-0.5" aria-hidden="true">
        <rect width="16" height="16" fill="#e8761e" stroke="none" />
        <path d="M8 2c2 1.500-2 2.500 0 5M10 3.500c-1.500 1-1 2 0 3M4 8.500h7v3H5zM11 9c3-.5 2 2 0 2M3.500 13.500h9" />
      </svg>
      <svg width="17" height="14" viewBox="0 0 17 14" fill="none" stroke="#fff" aria-hidden="true">
        <path d="M4.500 5.500h10v6h-10zM15.500 7v3" />
        <path d="M6 7h7v3H6z" fill="#fff" />
        <path d="M1.500 1v2M3.500 1v2M.5 3.500h4v2h-4zM2.500 6v5h2" />
      </svg>
      <svg width="15" height="14" viewBox="0 0 15 14" fill="none" stroke="#fff" strokeWidth="1.300" aria-hidden="true">
        <path d="M1 13C1 6 6 1 13 1M4 13c0-5 4-9 9-9M7 13c0-3.500 2.500-6 6-6" />
        <path d="M10 13c0-2 1-3 3-3v3z" fill="#fff" />
      </svg>
      <svg width="17" height="14" viewBox="0 0 17 14" fill="none" stroke="#fff" aria-hidden="true">
        <path d="M1 5h2.500L7 1.500v11L3.500 9H1zM9 5c1 1 1 3 0 4M11.500 3.500c2 2 2 5 0 7M14 2c3 3 3 7 0 10" />
      </svg>
      <svg width="17" height="15" viewBox="0 0 17 15" fill="none" stroke="#fff" strokeWidth="1.200" aria-hidden="true">
        <path d="M15 6V1H1v11h2v2.500L5.500 12H8M3.500 4h9M3.500 6.500h6M3.500 9H7" />
        <circle cx="12.500" cy="10.500" r="3.500" />
        <path d="M10.500 10.500h4" />
      </svg>
      <span className="ml-0.5">ENG</span>
      <div className="ml-1.5 text-center text-[11px] leading-[17px]">
        <div>10:31 AM</div>
        <div>3/16/2019</div>
      </div>
      <span className="mr-[3px] h-10 w-px bg-[#555]" />
    </div>
  </footer>
);

const App: React.FC = () => (
  <div className="flex h-screen flex-col overflow-hidden bg-[#f1f1f1]">
    <Gradients />
    <TitleBar />
    <DocumentTabs />
    <QuickAccess />
    <Ribbon />
    <main className="relative flex flex-1 flex-col bg-white">
      <SketchDrawing />
      <div className="relative flex items-start justify-between pt-1 pl-1">
        <div className="pt-px">
          <Browser />
        </div>
        <div className="pt-2.5 pr-[18px]">
          <ViewCube />
        </div>
      </div>
      <div className="relative mt-auto grid grid-cols-[1fr_auto_1fr] px-1 pb-[5px]">
        <div className="w-[300px]">
          <PanelHeader title="COMMENTS" />
        </div>
        <NavBar />
      </div>
      <ParametersDialog />
    </main>
    <Timeline />
    <Taskbar />
  </div>
);

export default App;
